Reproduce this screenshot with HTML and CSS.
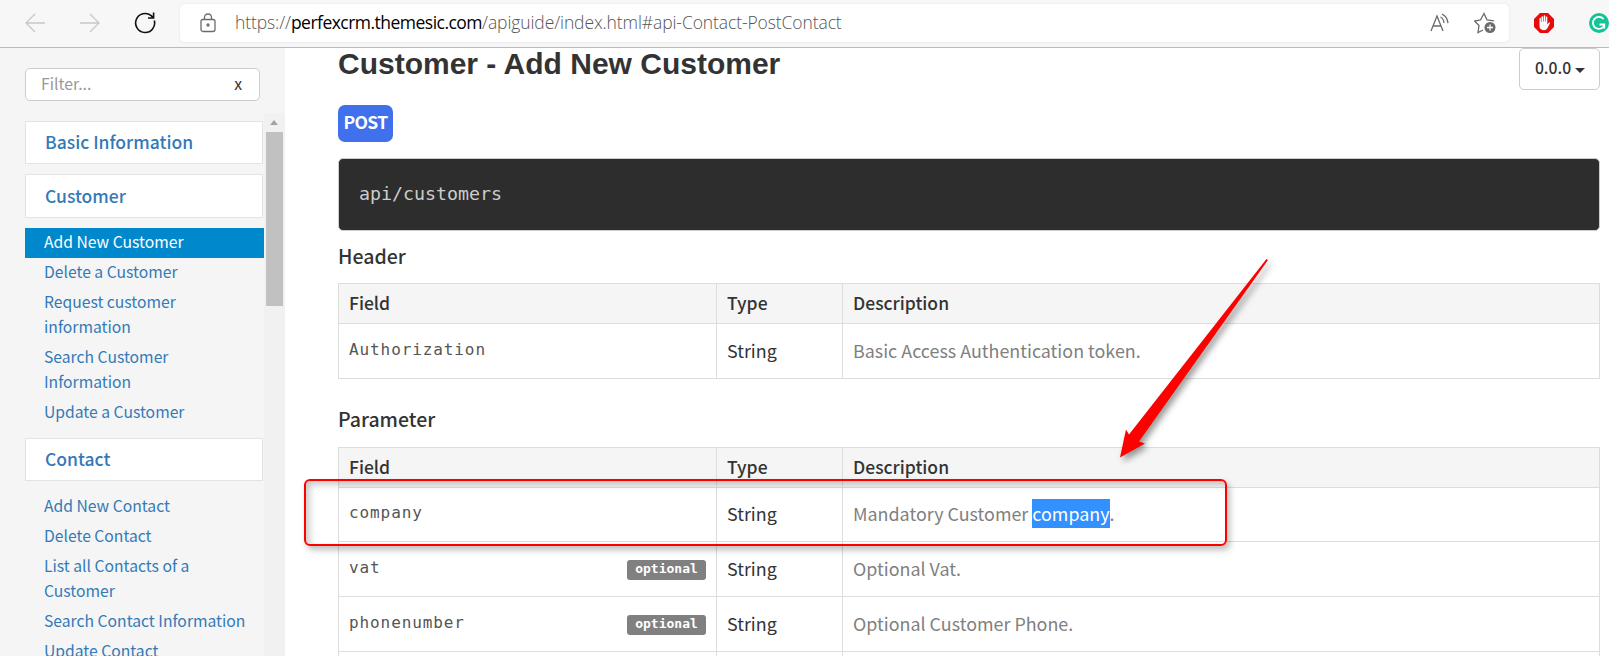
FILE: index.html
```
<!DOCTYPE html>
<html lang="en">
<head>
  <meta charset="UTF-8">
  <title>API Guide</title>
  <link rel="stylesheet" href="styles.css">
</head>
<body>
  <!-- Browser bar -->
  <div class="toolbar">
    <svg class="icon back" width="20" height="20" viewBox="0 0 20 20"><path d="M20 10H1M10 1L1 10l9 9" /></svg>
    <svg class="icon forward" width="20" height="20" viewBox="0 0 20 20"><path d="M0 10h19M10 1l9 9-9 9" /></svg>
    <svg class="icon reload" width="22" height="22" viewBox="0 0 22 22"><path d="M20.300 8.500A9.500 9.500 0 1 1 17.200 3.700L19 5.600M19.600 .5v5.500h-5.600" /></svg>
    <div class="address">
      <svg class="icon lock" width="16" height="20" viewBox="0 0 16 20"><rect x="1" y="6.500" width="14" height="12" rx="2" /><path d="M4.500 6.500V4.500a3.500 3.500 0 0 1 7 0v2" /><circle cx="8" cy="12" r="1" /></svg>
      <span class="url">https://<b>perfexcrm.themesic.com</b>/apiguide/index.html#api-Contact-PostContact</span>
      <svg class="icon read" width="20" height="20" viewBox="0 0 20 20"><path d="M1 18L7 3l6 15M3.200 13h7.600M10.500 4q3 1.500 3.500 6M12 1.200q5 2 6 9" /></svg>
      <svg class="icon star" width="22" height="22" viewBox="0 0 22 22"><path d="M9 18l-5 2.500 1-7L.500 9l6-1L10 1.500 13 8l7 .8" /><circle class="dot" cx="16" cy="15.500" r="5.500" /><path class="plus" d="M16 12.500v6M13 15.500h6" /></svg>
    </div>
    <svg class="blocker" width="20" height="20" viewBox="0 0 20 20"><path fill="#e60c0c" d="M6 0h8l6 6v8l-6 6H6l-6-6V6z" /><path fill="#fff" d="M5.500 11V5.500q0-.8.700-.8t.7.800V9h.6V4q0-.8.800-.8t.8.800v4.600h.6V3q0-.8.800-.8t.8.800v5.600h.6V4.200q0-.8.700-.8t.7.800v7.400l1.400-1.800q1-.8 1.500 0L13.500 15q-1 2.200-3.700 2.200Q5.500 17 5.500 13z" /></svg>
    <svg class="grammar" width="20" height="20" viewBox="0 0 20 20"><circle cx="10" cy="10" r="10" fill="#15c39a" /><path fill="none" stroke="#fff" stroke-width="1.800" d="M14.500 6A6 6 0 1 0 15.500 12M10.500 11.500h4.800v4" /></svg>
  </div>

  <div class="page">
    <!-- Sidebar -->
    <div class="sidebar">
      <div class="filter"><span>Filter...</span><button>x</button></div>
      <div class="scroller">
        <div class="nav">
          <h4>Basic Information</h4>
          <h4 class="customer">Customer</h4>
          <ul>
            <li class="active"><a>Add New Customer</a></li>
            <li><a>Delete a Customer</a></li>
            <li><a>Request customer<br>information</a></li>
            <li><a>Search Customer<br>Information</a></li>
            <li><a>Update a Customer</a></li>
          </ul>
          <h4>Contact</h4>
          <ul class="contacts">
            <li><a>Add New Contact</a></li>
            <li><a>Delete Contact</a></li>
            <li><a>List all Contacts of a<br>Customer</a></li>
            <li><a>Search Contact Information</a></li>
            <li><a>Update Contact</a></li>
          </ul>
        </div>
        <div class="scrollbar"><i class="up"></i><i class="thumb"></i></div>
      </div>
    </div>

    <!-- Content -->
    <div class="content">
      <div class="heading">
        <h1>Customer - Add New Customer</h1>
        <button class="version">0.0.0<i class="caret"></i></button>
      </div>
      <span class="method">POST</span>
      <pre>api/customers</pre>

      <h2>Header</h2>
      <table>
        <tr><th class="field">Field</th><th class="type">Type</th><th>Description</th></tr>
        <tr><td><code>Authorization</code></td><td>String</td><td class="desc">Basic Access Authentication token.</td></tr>
      </table>

      <h2 class="parameter">Parameter</h2>
      <table>
        <tr><th class="field">Field</th><th class="type">Type</th><th>Description</th></tr>
        <tr class="first"><td><code>company</code></td><td>String</td><td class="desc">Mandatory Customer <mark>company</mark>.</td></tr>
        <tr><td><code>vat</code><span class="optional">optional</span></td><td>String</td><td class="desc">Optional Vat.</td></tr>
        <tr><td><code>phonenumber</code><span class="optional">optional</span></td><td>String</td><td class="desc">Optional Customer Phone.</td></tr>
        <tr><td></td><td></td><td></td></tr>
      </table>
    </div>
  </div>

  <!-- Annotations over the page -->
  <div class="callout"></div>
  <svg class="arrow" width="170" height="220" viewBox="0 0 170 220"><path d="M157.500 9L159 10 30 191.500 36 193.500 11 207.500 17 179.500 20 184.500z" /></svg>
</body>
</html>
```

FILE: styles.css
```
* {
  box-sizing: border-box;
}
body {
  margin: 0;
  height: 656px;
  overflow: hidden;
  position: relative;
  background: #fff;
  color: #333;
  font-family: "Noto Sans CJK SC", "Noto Sans", sans-serif;
}

/* browser bar */
.toolbar {
  display: flex;
  align-items: center;
  height: 48px;
  padding: 0 0 2px 25px;
  background: #f7f7f7;
  border-bottom: 1px solid #bbb;
}
.toolbar svg {
  flex: none;
}
.icon {
  fill: none;
  stroke: #6b6b6b;
  stroke-width: 1.3;
}
.back, .forward {
  stroke: #c8c8c8;
}
.forward {
  margin-left: 35px;
}
.reload {
  margin-left: 34px;
  stroke: #111;
  stroke-width: 1.6;
}
.address {
  display: flex;
  align-items: center;
  flex: none;
  width: 1329px;
  height: 38px;
  margin-left: 24px;
  padding-left: 20px;
  background: #fff;
  border-radius: 5px;
  box-shadow: 0 0 3px rgba(0, 0, 0, 0.08);
}
.url {
  flex: 1;
  margin: -2px 0 0 19px;
  font-family: "Open Sans", sans-serif;
  font-weight: 300;
  font-size: 17.5px;
  letter-spacing: -0.1px;
  color: #555;
}
.url b {
  font-weight: 400;
  letter-spacing: -0.52px;
  color: #000;
}
.star {
  margin: 0 13px 0 24px;
}
.star .dot {
  fill: #6b6b6b;
  stroke: none;
}
.star .plus {
  stroke: #fff;
}
.blocker {
  margin-left: 25px;
}
.grammar {
  margin-left: 35px;
}

.page {
  display: flex;
  height: 608px;
  overflow: hidden;
}

/* sidebar */
.sidebar {
  width: 285px;
  height: 608px;
  padding-top: 20px;
  background: #f5f5f5;
  overflow: hidden;
}
.filter {
  display: flex;
  align-items: center;
  justify-content: space-between;
  width: 235px;
  height: 33px;
  margin-left: 25px;
  padding: 0 17px 2px 15px;
  background: #fff;
  border: 1px solid #ccc;
  border-radius: 5px;
  font-size: 15.8px;
  color: #999;
}
.filter button {
  padding: 0;
  border: 0;
  background: none;
  font: inherit;
  color: #333;
}
.scroller {
  display: flex;
  margin-top: 12px;
}
.nav {
  width: 264px;
  padding: 8px 0 0 25px;
}
.nav h4 {
  width: 238px;
  height: 43px;
  margin: 0 0 10px;
  padding-left: 19px;
  background: #fff;
  border: 1px solid #e3e3e3;
  font-size: 17.5px;
  font-weight: 500;
  line-height: 39px;
  color: #337ab7;
}
.nav h4.customer {
  height: 44px;
  line-height: 41px;
}
.nav ul {
  margin: 0 0 10px;
  padding: 0;
  list-style: none;
}
.nav .contacts {
  padding-top: 1px;
}
.nav li {
  padding: 1px 0 4px 19px;
  font-size: 15.7px;
  line-height: 25px;
  color: #337ab7;
}
.nav .active {
  background: #0088cc;
  color: #fff;
}
.scrollbar {
  width: 21px;
  height: 543px;
  padding: 7px 2px 0;
  background: #f1f1f1;
}
.up {
  display: block;
  margin: 0 4px 7px;
  width: 0;
  border: 4.5px solid transparent;
  border-top: 0;
  border-bottom: 5px solid #a3a3a3;
}
.thumb {
  display: block;
  height: 174px;
  background: #c1c1c1;
}

/* content */
.content {
  width: 1262px;
  margin-left: 53px;
}
.heading {
  display: flex;
  justify-content: space-between;
  height: 57px;
}
h1 {
  margin: -3px 0 0;
  font: bold 30px/37px "Liberation Sans", Arial, sans-serif;
}
.version {
  display: flex;
  align-items: center;
  justify-content: center;
  width: 81px;
  height: 42px;
  padding: 0 0 3px 1px;
  background: #fff;
  border: 1px solid #ccc;
  border-radius: 5px;
  font: 500 15.7px "Noto Sans CJK SC", sans-serif;
  color: #333;
}
.caret {
  margin: 5px 0 0 4px;
  border: 5px solid transparent;
  border-top-color: #333;
  border-bottom: 0;
}
.method {
  display: block;
  width: 55px;
  height: 37px;
  background: #4070ec;
  border-radius: 7px;
  font-size: 17.5px;
  font-weight: 700;
  letter-spacing: -0.7px;
  line-height: 34px;
  text-align: center;
  color: #fff;
}
pre {
  height: 73px;
  margin: 16px 0 0;
  padding-left: 20px;
  background: #2d2d2d;
  border: 1px solid #ccc;
  border-radius: 5px;
  font: 18.3px/69px "DejaVu Sans Mono", monospace;
  color: #ccc;
}
h2 {
  height: 52px;
  margin: 0;
  font-size: 19.5px;
  font-weight: 500;
  line-height: 49px;
}
h2.parameter {
  height: 68px;
  line-height: 80px;
}
table {
  width: 1262px;
  border-collapse: collapse;
  table-layout: fixed;
  font-size: 17.9px;
}
th, td {
  padding: 0 10px;
  border: 1px solid #ddd;
  text-align: left;
}
th {
  height: 40px;
  padding-bottom: 1px;
  background: #f5f5f5;
  font-size: 17.5px;
  font-weight: 500;
  line-height: 30px;
}
.field {
  width: 378px;
}
.type {
  width: 126px;
}
td {
  height: 55px;
  padding-bottom: 2px;
  line-height: 29px;
}
.first td {
  height: 54px;
}
.desc {
  color: #808080;
}
code {
  position: relative;
  top: -3px;
  font: 16px "DejaVu Sans Mono", monospace;
  letter-spacing: 0.9px;
  color: #555;
}
mark {
  display: inline-block;
  background: #3390ff;
  color: #fff;
}
.optional {
  float: right;
  width: 79px;
  height: 20px;
  margin-top: 6px;
  background: #808080;
  border-radius: 3px;
  font: bold 13px/18px "DejaVu Sans Mono", monospace;
  text-align: center;
  color: #fff;
}

/* annotations */
.callout {
  position: absolute;
  left: 304px;
  top: 479px;
  width: 923px;
  height: 67px;
  border: 2px solid #f00;
  border-radius: 6px;
  box-shadow: 3px 4px 6px rgba(0, 0, 0, 0.25), inset 4px 4px 6px rgba(0, 0, 0, 0.2);
}
.arrow {
  position: absolute;
  left: 1109px;
  top: 250px;
  fill: #f00;
  filter: drop-shadow(3px 4px 3px rgba(0, 0, 0, 0.4));
}
```
